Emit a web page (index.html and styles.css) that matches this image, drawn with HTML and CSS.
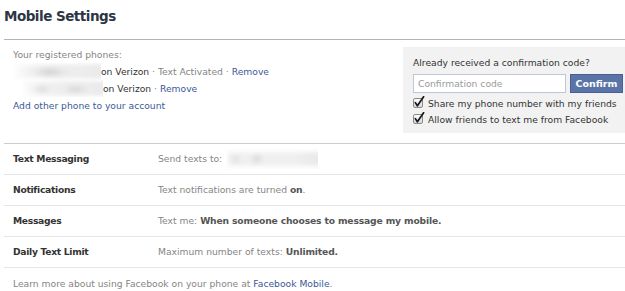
FILE: index.html
```html
<!DOCTYPE html>
<html>
<head>
<meta charset="utf-8">
<link rel="stylesheet" href="styles.css">
</head>
<body>
<div class="page">
  <h1 class="title">Mobile Settings</h1>
  <div class="top">
    <div class="phones">
      <div class="line muted">Your registered phones:</div>
      <div class="line"><span class="blur w88"><span class="smudge"></span></span><span class="dark">on Verizon</span><span class="muted"> · Text Activated · </span><a class="link">Remove</a></div>
      <div class="line"><span class="blur w90"><span class="smudge s2"></span></span><span class="dark">on Verizon</span><span class="muted"> · </span><a class="link">Remove</a></div>
      <div class="line"><a class="link">Add other phone to your account</a></div>
    </div>
    <div class="confirm-box">
      <div class="cb-title">Already received a confirmation code?</div>
      <div class="cb-form">
        <div class="input">Confirmation code</div>
        <div class="btn">Confirm</div>
      </div>
      <div class="check-row">
        <svg class="check" width="12" height="12" viewBox="0 0 12 12"><defs><linearGradient id="g1" x1="0" y1="0" x2="0" y2="1"><stop offset="0" stop-color="#ffffff"/><stop offset="1" stop-color="#d6d6d6"/></linearGradient></defs><rect x="0.5" y="2.5" width="9" height="9" rx="1.5" fill="url(#g1)" stroke="#8a8a8a"/><path d="M2.3 6.6 L4.4 9.8 L10.6 0.8" fill="none" stroke="#151515" stroke-width="1.7" stroke-linecap="round" stroke-linejoin="round"/></svg>
        <span>Share my phone number with my friends</span>
      </div>
      <div class="check-row">
        <svg class="check" width="12" height="12" viewBox="0 0 12 12"><defs><linearGradient id="g2" x1="0" y1="0" x2="0" y2="1"><stop offset="0" stop-color="#ffffff"/><stop offset="1" stop-color="#d6d6d6"/></linearGradient></defs><rect x="0.5" y="2.5" width="9" height="9" rx="1.5" fill="url(#g2)" stroke="#8a8a8a"/><path d="M2.3 6.6 L4.4 9.8 L10.6 0.8" fill="none" stroke="#151515" stroke-width="1.7" stroke-linecap="round" stroke-linejoin="round"/></svg>
        <span>Allow friends to text me from Facebook</span>
      </div>
    </div>
  </div>
  <div class="table">
    <div class="row">
      <div class="label">Text Messaging</div>
      <div class="value">Send texts to:<span class="blur wv"><span class="smudge s3"></span></span></div>
    </div>
    <div class="row">
      <div class="label">Notifications</div>
      <div class="value">Text notifications are turned <b>on</b>.</div>
    </div>
    <div class="row">
      <div class="label">Messages</div>
      <div class="value">Text me: <b>When someone chooses to message my mobile.</b></div>
    </div>
    <div class="row">
      <div class="label">Daily Text Limit</div>
      <div class="value">Maximum number of texts: <b>Unlimited.</b></div>
    </div>
  </div>
  <div class="footer">Learn more about using Facebook on your phone at <a class="link">Facebook Mobile</a>.</div>
</div>
</body>
</html>
```

FILE: styles.css
```css
html, body {
  margin: 0;
  padding: 0;
  background: #ffffff;
}
body {
  font-family: "DejaVu Sans", "Liberation Sans", sans-serif;
  font-size: 9.2px;
  color: #333333;
  width: 625px;
  overflow: hidden;
}
.page {
  padding-left: 4px;
}
.title {
  margin: 0;
  padding-top: 8px;
  height: 16px;
  line-height: 16px;
  font-size: 13.5px;
  letter-spacing: -0.5px;
  font-weight: bold;
  color: #2d3545;
  margin-bottom: 15px;
}
.top {
  border-top: 1px solid #b4b4b4;
  display: flex;
  justify-content: space-between;
  height: 103px;
}
.phones {
  padding-top: 6px;
  padding-left: 9px;
}
.line {
  line-height: 17px;
  height: 17px;
  white-space: nowrap;
}
.muted {
  color: #858585;
}
.dark {
  color: #333333;
}
.link {
  color: #3b5998;
  text-decoration: none;
}
.blur {
  display: inline-block;
  vertical-align: top;
  height: 17px;
  position: relative;
  overflow: hidden;
}
.w88 { width: 88px; }
.w90 { width: 90px; }
.wv { width: 92px; margin-left: 4px; height: 30px; }
.smudge {
  position: absolute;
  left: 2px;
  right: -6px;
  top: 1px;
  height: 15px;
  background:
    radial-gradient(ellipse 16px 4px at 38% 55%, #c9c9c9, rgba(220,220,220,0) 100%),
    radial-gradient(ellipse 30px 7px at 35% 50%, #e4e4e4, rgba(235,235,235,0) 100%),
    linear-gradient(90deg, rgba(244,244,244,0.4), #f0f0f0 40%, #ebebeb 90%);
  filter: blur(2.5px);
}
.s2 {
  left: 12px;
  background:
    radial-gradient(ellipse 10px 4px at 20% 55%, #d0d0d0, rgba(220,220,220,0) 100%),
    radial-gradient(ellipse 12px 4px at 60% 55%, #cfcfcf, rgba(220,220,220,0) 100%),
    linear-gradient(90deg, rgba(242,242,242,0.5), #eeeeee 40%, #ebebeb 90%);
}
.s3 {
  top: 8px;
  height: 14px;
  background:
    radial-gradient(ellipse 6px 5px at 30% 50%, #cdcdcd, rgba(220,220,220,0) 100%),
    radial-gradient(ellipse 5px 5px at 8% 50%, #d8d8d8, rgba(220,220,220,0) 100%),
    linear-gradient(90deg, #f0f0f0, #efefef 70%, #eaeaea 90%);
}
.confirm-box {
  margin-top: 7px;
  width: 212px;
  height: 78px;
  padding: 8px 0 0 10px;
  background: #f2f2f2;
}
.cb-title {
  line-height: 16px;
  color: #333333;
  white-space: nowrap;
}
.cb-form {
  display: flex;
  gap: 4px;
  margin-top: 3px;
}
.input {
  box-sizing: border-box;
  width: 153px;
  height: 19px;
  line-height: 17px;
  border: 1px solid #bdc7d8;
  background: #ffffff;
  color: #9a9a9a;
  padding-left: 4px;
}
.btn {
  box-sizing: border-box;
  width: 53px;
  height: 19px;
  line-height: 17px;
  background: #5b74a8;
  border: 1px solid #4a5f94;
  color: #ffffff;
  font-weight: bold;
  font-size: 9.5px;
  text-align: center;
}
.check-row {
  display: flex;
  align-items: center;
  height: 16px;
  line-height: 16px;
  white-space: nowrap;
  color: #333333;
}
.cb-form + .check-row {
  margin-top: 3px;
}
.check {
  margin-right: 3px;
  flex: none;
  position: relative;
  top: -2px;
}
.table {
  border-top: 1px solid #cccccc;
}
.row {
  display: flex;
  height: 30px;
  line-height: 30px;
  border-bottom: 1px solid #e6e6e6;
  white-space: nowrap;
}
.label {
  width: 154px;
  flex: none;
  padding-left: 9px;
  box-sizing: border-box;
  font-weight: bold;
  letter-spacing: -0.3px;
  color: #333333;
}
.value {
  color: #858585;
}
.value b {
  color: #555555;
  letter-spacing: -0.15px;
}
.footer {
  padding-top: 8px;
  padding-left: 9px;
  line-height: 16px;
  color: #858585;
  white-space: nowrap;
}
```
